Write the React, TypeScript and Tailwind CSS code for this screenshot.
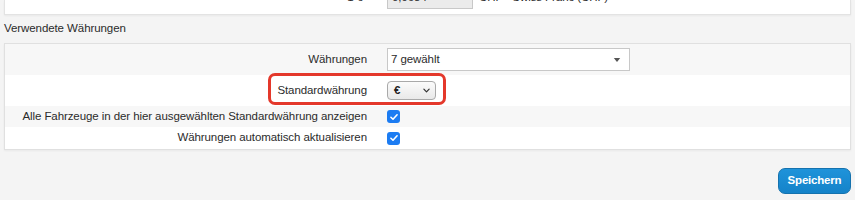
import React from "react";

const font = { fontFamily: '"Liberation Sans", Arial, sans-serif' };

function Checkbox() {
  return (
    <span className="flex h-[13px] w-[13px] items-center justify-center rounded-[3px] bg-[#1c7cf2]">
      <svg viewBox="0 0 12 12" className="h-[10px] w-[10px]" fill="none">
        <path d="M2.3 6.3 4.8 8.7 9.7 3.3" stroke="white" strokeWidth="1.9" strokeLinecap="round" strokeLinejoin="round" />
      </svg>
    </span>
  );
}

interface RowProps {
  label: string;
  height: string;
  shade?: boolean;
  children: React.ReactNode;
}

const Row: React.FC<RowProps> = ({ label, height, shade, children }) => (
  <div className={`flex items-center ${height} ${shade ? "bg-[#f7f7f7]" : "bg-white"}`}>
    <div className="w-[363px] pr-[1px] text-right text-[11.5px] tracking-[-0.08px] text-[#2b2b2b]">{label}</div>
    <div className="ml-[19px] flex items-center">{children}</div>
  </div>
);

export default function App() {
  return (
    <div className="relative h-[200px] w-[855px] overflow-hidden bg-[#f4f4f4]" style={font}>
      {/* previous panel, cut off at the top */}
      <div className="mx-[4px] h-[15px] overflow-hidden border-x border-b border-[#e3e3e3] bg-white shadow-[0_1px_2px_rgba(0,0,0,0.05)]">
        <div className="-mt-[18px] flex h-[31px] items-center text-[11.5px] tracking-[-0.08px] text-[#2b2b2b]">
          <div className="w-[358px] text-right">1 €</div>
          <div className="ml-[24px] flex h-[22px] w-[86px] items-center border border-[#c8c8c8] bg-[#ebebeb] px-[4px]">
            0,9684
          </div>
          <span className="ml-[6px]">CHF - Swiss Franc (CHF)</span>
        </div>
      </div>

      <div className="flex h-[28px] items-center pl-[4px] text-[11.5px] tracking-[-0.08px] text-[#2b2b2b]">Verwendete Währungen</div>

      <div className="mx-[4px] border border-[#e0e0e0] bg-white shadow-[0_1px_2px_rgba(0,0,0,0.05)]">
        <Row label="Währungen" height="h-[31px]" shade>
          <div className="flex h-[23px] w-[243px] items-center justify-between border border-[#c8c8c8] bg-white pl-[3px] pr-[8px] text-[11.5px] tracking-[-0.08px] text-[#2b2b2b]">
            <span>7 gewählt</span>
            <svg viewBox="0 0 8 5" className="h-[4px] w-[8px]">
              <path d="M0 0h8L4 5z" fill="#555" />
            </svg>
          </div>
        </Row>
        <Row label="Standardwährung" height="h-[31px]">
          <div className="flex h-[19px] w-[49px] items-center justify-between rounded-[4px] border border-[#a9a9a9] bg-gradient-to-b from-[#fbfbfb] to-[#e9e9e9] pl-[6px] pr-[5px] text-[11.5px] font-bold text-[#222]">
            <span>€</span>
            <svg viewBox="0 0 8 5" className="h-[5px] w-[7px]" fill="none">
              <path d="M1 1l3 3 3-3" stroke="#333" strokeWidth="1.4" strokeLinecap="round" strokeLinejoin="round" />
            </svg>
          </div>
        </Row>
        <Row label="Alle Fahrzeuge in der hier ausgewählten Standardwährung anzeigen" height="h-[21px]" shade>
          <Checkbox />
        </Row>
        <Row label="Währungen automatisch aktualisieren" height="h-[22px]">
          <Checkbox />
        </Row>
      </div>

      <div className="mr-[4px] mt-[18px] flex justify-end">
        <button className="h-[26px] w-[73px] rounded-[7px] border border-[#1572ae] bg-gradient-to-b from-[#1f93da] to-[#1583c9] text-[11.5px] font-bold tracking-[-0.2px] text-white">
          Speichern
        </button>
      </div>

      {/* highlight annotation */}
      <div className="pointer-events-none absolute left-[268px] top-[73px] h-[32px] w-[178px] rounded-[7px] border-[3px] border-[#e4382b]" />
    </div>
  );
}
